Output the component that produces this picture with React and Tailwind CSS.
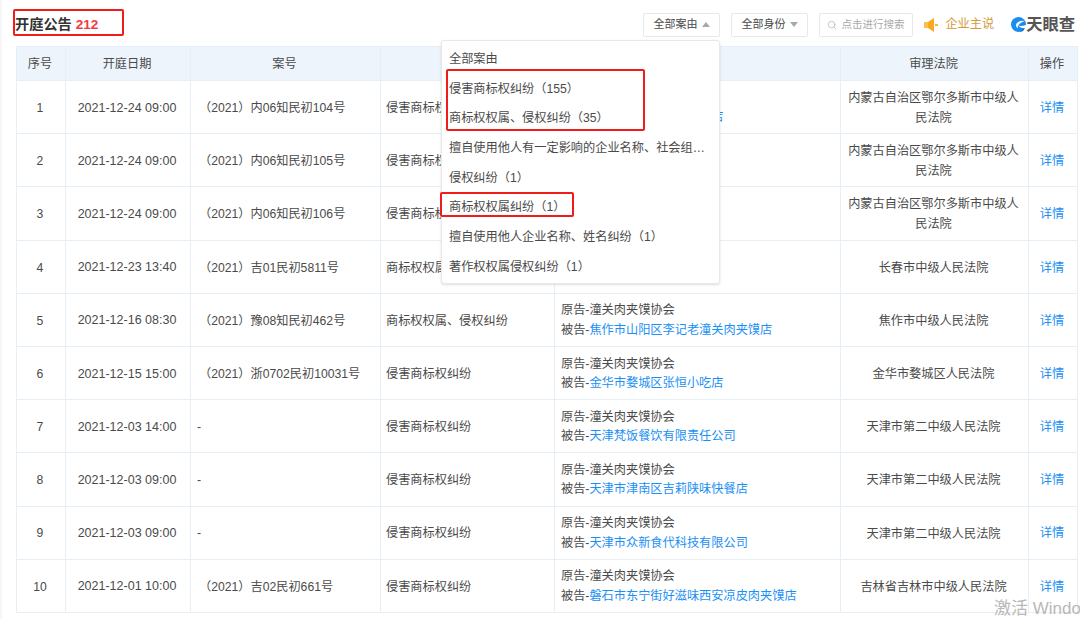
import React from 'react'
import { Search } from 'lucide-react'

const rows = [
  ['1', '2021-12-24 09:00', '（2021）内06知民初104号', '侵害商标权纠纷', '鄂尔多斯市东胜区肉馍店', '内蒙古自治区鄂尔多斯市中级人民法院'],
  ['2', '2021-12-24 09:00', '（2021）内06知民初105号', '侵害商标权纠纷', '鄂尔多斯市肉夹馍店', '内蒙古自治区鄂尔多斯市中级人民法院'],
  ['3', '2021-12-24 09:00', '（2021）内06知民初106号', '侵害商标权纠纷', '鄂尔多斯市肉夹馍店', '内蒙古自治区鄂尔多斯市中级人民法院'],
  ['4', '2021-12-23 13:40', '（2021）吉01民初5811号', '商标权权属、侵权纠纷', '长春市肉夹馍店', '长春市中级人民法院'],
  ['5', '2021-12-16 08:30', '（2021）豫08知民初462号', '商标权权属、侵权纠纷', '焦作市山阳区李记老潼关肉夹馍店', '焦作市中级人民法院'],
  ['6', '2021-12-15 15:00', '（2021）浙0702民初10031号', '侵害商标权纠纷', '金华市婺城区张恒小吃店', '金华市婺城区人民法院'],
  ['7', '2021-12-03 14:00', '-', '侵害商标权纠纷', '天津梵饭餐饮有限责任公司', '天津市第二中级人民法院'],
  ['8', '2021-12-03 09:00', '-', '侵害商标权纠纷', '天津市津南区吉莉陕味快餐店', '天津市第二中级人民法院'],
  ['9', '2021-12-03 09:00', '-', '侵害商标权纠纷', '天津市众新食代科技有限公司', '天津市第二中级人民法院'],
  ['10', '2021-12-01 10:00', '（2021）吉02民初661号', '侵害商标权纠纷', '磐石市东宁街好滋味西安凉皮肉夹馍店', '吉林省吉林市中级人民法院'],
]

const causes = [
  '全部案由',
  '侵害商标权纠纷（155）',
  '商标权权属、侵权纠纷（35）',
  '擅自使用他人有一定影响的企业名称、社会组织名称、姓名纠纷（3）',
  '侵权纠纷（1）',
  '商标权权属纠纷（1）',
  '擅自使用他人企业名称、姓名纠纷（1）',
  '著作权权属侵权纠纷（1）',
]

const App = () => {
  return (
    <div className="relative w-[1080px] h-[619px] overflow-hidden bg-white border-l-2 border-[#f6f6f6] text-[12.2px] text-[#4a4a4a] font-['Liberation_Sans','Noto_Sans_CJK_SC',sans-serif]">
      {/* top bar */}
      <div className="flex items-center h-[46px] pl-[13px] pt-[3px]">
        <div className="text-[14.2px] font-bold text-[#333]">
          开庭公告 <span className="text-[13.6px] text-[#f5393c]">212</span>
        </div>
        <div className="ml-auto flex items-center">
          <div className="w-[77px] h-[24px] flex items-center justify-center gap-[5px] border border-[#e8e8e8] rounded-[2px] text-[11px]">
            全部案由
            <div className="w-0 h-0 border-x-[4px] border-x-transparent border-b-[5px] border-b-[#a8a8a8]"></div>
          </div>
          <div className="ml-[11px] w-[77px] h-[24px] flex items-center justify-center gap-[5px] border border-[#e8e8e8] rounded-[2px] text-[11px]">
            全部身份
            <div className="w-0 h-0 border-x-[4px] border-x-transparent border-t-[5px] border-t-[#a8a8a8]"></div>
          </div>
          <div className="ml-[11px] w-[94px] h-[24px] flex items-center gap-[4px] pl-[7px] border border-[#e8e8e8] rounded-[2px] text-[#aaa] text-[10.5px]">
            <Search size={10} strokeWidth={1.5} />
            点击进行搜索
          </div>
          <svg className="ml-[11px]" width="14" height="16" viewBox="0 0 14 16">
            <rect x="0" y="5" width="5" height="6" fill="#f9c04c" />
            <path d="M4 5 L10 1 V15 L4 11 Z" fill="#f9a81f" />
            <rect x="11" y="7" width="3" height="2" fill="#f9b935" />
          </svg>
          <div className="ml-[7px] text-[#d39a3b]">企业主说</div>
          <svg className="ml-[17px]" width="15" height="15" viewBox="0 0 15 15">
            <circle cx="7.5" cy="7.5" r="7.5" fill="#1a8cf0" />
            <path d="M13.5 4 Q8 3 5.5 6.5 Q4 9.5 7 11.5 Q5 7.5 13.5 4 Z" fill="#ffffff" />
            <path d="M7 8 Q9.5 10 15 8 L15 11 Q10 12 7 8 Z" fill="#ffffff" />
            <path d="M9 15 Q10.5 12 14 11 L12 14 Z" fill="#0e6fc4" />
          </svg>
          <div className="mr-[5px] text-[16.3px] font-bold text-[#555] leading-none">天眼查</div>
        </div>
      </div>

      {/* table */}
      <table className="ml-[14px] w-[1061px] table-fixed border-collapse">
        <colgroup>
          <col className="w-[49px]" />
          <col className="w-[125px]" />
          <col className="w-[190px]" />
          <col className="w-[174px]" />
          <col className="w-[286px]" />
          <col className="w-[188px]" />
          <col className="w-[49px]" />
        </colgroup>
        <thead>
          <tr className="h-[34px] bg-[#edf4fb]">
            {['序号', '开庭日期', '案号', '案由', '当事人', '审理法院', '操作'].map((h) => (
              <th key={h} className="border border-[#e6eef7] font-normal text-center pt-[2px] pr-[2px]">{h}</th>
            ))}
          </tr>
        </thead>
        <tbody>
          {rows.map((r) => (
            <tr key={r[0]} className="h-[53.2px]">
              <td className="border border-[#e6eef7] text-center pt-[2px] pr-[2px]">{r[0]}</td>
              <td className="border border-[#e6eef7] text-center text-[12.5px] pt-[2px] pr-[2px]">{r[1]}</td>
              <td className="border border-[#e6eef7] pl-[6px] pt-[2px]">
                <span className={r[2] === '-' ? '' : 'ml-[2px]'}>{r[2]}</span>
              </td>
              <td className="border border-[#e6eef7] pl-[5px] pt-[2px]">{r[3]}</td>
              <td className="border border-[#e6eef7] pl-[6px] pt-[2px] leading-[19.5px]">
                <div>原告-潼关肉夹馍协会</div>
                <div>被告-<span className="text-[#1a90f5]">{r[4]}</span></div>
              </td>
              <td className="border border-[#e6eef7] pl-[6px] pr-[8px] pt-[2px] text-center leading-[20px]">{r[5]}</td>
              <td className="border border-[#e6eef7] text-center text-[#1a90f5] pt-[2px] pr-[2px]">详情</td>
            </tr>
          ))}
        </tbody>
      </table>

      {/* cause dropdown */}
      <div className="absolute left-[439px] top-[40px] w-[279px] h-[244px] py-[4px] bg-white border border-[#e8e8e8] rounded-[3px] shadow-sm">
        {causes.map((c) => (
          <div key={c} className="h-[29.7px] pl-[7px] pr-[12px] leading-[29.7px] truncate">{c}</div>
        ))}
      </div>

      {/* red marks */}
      <div className="absolute left-[11px] top-[9px] w-[111px] h-[27px] border-2 border-[#f01c1c] rounded-[2px]"></div>
      <div className="absolute left-[444px] top-[69px] w-[199px] h-[62px] border-2 border-[#f01c1c] rounded-[2px]"></div>
      <div className="absolute left-[438px] top-[192px] w-[134px] h-[25px] border-2 border-[#f01c1c] rounded-[2px]"></div>

      {/* watermark */}
      <div className="absolute left-[992px] top-[596px] whitespace-nowrap text-[17px] text-[#b8b8b8]">激活 Windows</div>
    </div>
  )
}

export default App
